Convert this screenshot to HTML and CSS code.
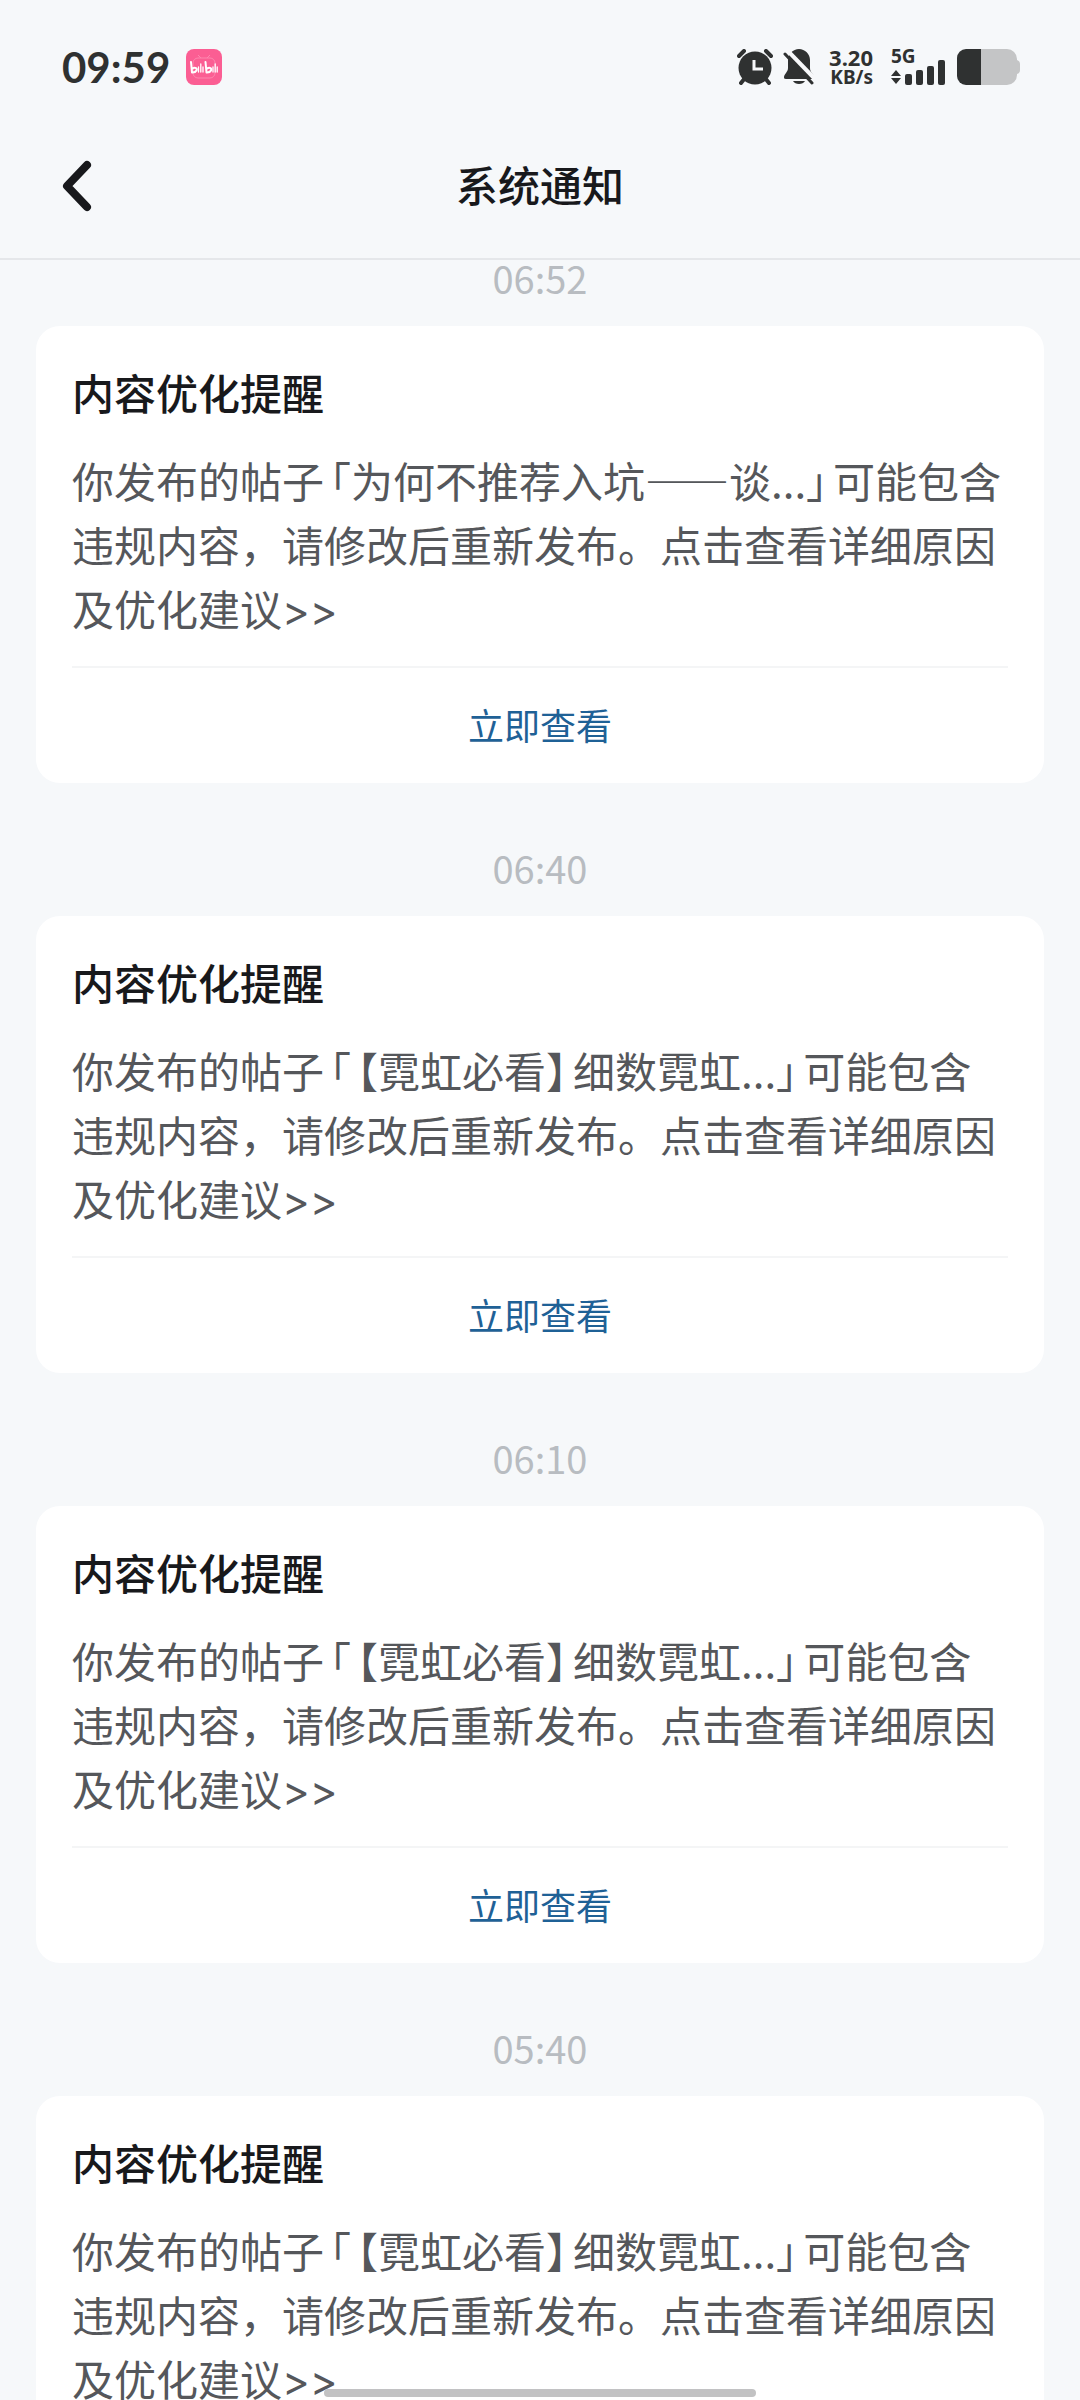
FILE: index.html
```html
<!DOCTYPE html>
<html lang="zh-CN">
<head>
    <meta charset="UTF-8">
    <meta name="viewport" content="width=device-width, initial-scale=1.0">
    <title>系统通知</title>
    <link rel="stylesheet" href="styles.css">
</head>
<body>

    <!-- Status bar -->
    <div class="status-bar">
        <span class="clock">09:59</span>
        <svg class="app-icon" viewBox="0 0 36 36" aria-hidden="true">
            <rect width="36" height="36" rx="8" fill="#fb5e93"/>
            <rect x="7" y="9" width="22" height="20" rx="5" fill="none" stroke="#fd86ae" stroke-width="1"/>
            <path d="M12 6l3 3M24 6l-3 3" stroke="#fd86ae" stroke-width="1"/>
            <g fill="none" stroke="#fff" stroke-width="2" stroke-linecap="round">
                <path d="M5 13l1 10.500M6.500 19.500c3-1.500 5 0 4 2s-3 2-4 2M19.500 13l1 10.500M21 19.500c3-1.500 5 0 4 2s-3 2-4 2"/>
                <path d="M12.500 18v5M14.800 15v8M17 18v5M27 18v5M29.200 15v8M31.200 18v5" stroke-width="1.300"/>
            </g>
        </svg>
        <div class="status-right">
            <svg class="status-icon" viewBox="0 0 36 36" aria-hidden="true">
                <path d="M2 7l5-5M34 7l-5-5" stroke="#2f3131" stroke-width="4" stroke-linecap="round"/>
                <path d="M8 29l-4 5M28 29l4 5" stroke="#2f3131" stroke-width="4" stroke-linecap="round"/>
                <circle cx="18" cy="19" r="16.500" fill="#2f3131"/>
                <path d="M17 11v9h9" fill="none" stroke="#f7f8fa" stroke-width="3"/>
            </svg>
            <svg class="status-icon bell" viewBox="0 0 32 36" aria-hidden="true">
                <path d="M16 0c6 0 11 5 11 11v8c0 5 4 6 4 9 0 1-1 2-2 2H3c-2 0-2-1-2-2 0-3 4-5 4-9v-8C5 5 10 0 16 0z" fill="#2f3131"/>
                <path d="M10 32h12c-2 4-10 4-12 0z" fill="#2f3131"/>
                <path d="M4 1l28 29" stroke="#f7f8fa" stroke-width="4"/>
                <path d="M2 5l27 29" stroke="#2f3131" stroke-width="3" stroke-linecap="round"/>
            </svg>
            <div class="speed">
                <span class="speed-value">3.20</span>
                <span class="speed-unit">KB/s</span>
            </div>
            <div class="network">
                <span class="network-type">5G</span>
                <svg class="signal" viewBox="0 0 54 25" aria-hidden="true" fill="#2f3131">
                    <path d="M0 16l5-6 5 6zM0 18h10l-5 6z"/>
                    <rect x="14" y="14" width="7" height="11" rx="2"/>
                    <rect x="25" y="10" width="7" height="15" rx="2"/>
                    <rect x="36" y="6" width="7" height="19" rx="2"/>
                    <rect x="47" y="0" width="7" height="25" rx="2"/>
                </svg>
            </div>
            <svg class="battery" viewBox="0 0 63 36" aria-hidden="true">
                <path d="M24 0h26a10 10 0 0 1 10 10v1q3 1 3 4v6q0 3-3 4v1a10 10 0 0 1-10 10H24z" fill="#c4c5c6"/>
                <path d="M24 0H9a9 9 0 0 0-9 9v18a9 9 0 0 0 9 9h15z" fill="#2f3131"/>
            </svg>
        </div>
    </div>

    <!-- Title bar -->
    <header class="header">
        <button type="button" class="back" aria-label="返回">
            <svg viewBox="0 0 30 52" aria-hidden="true">
                <path d="M25 5L5 26l20 21" fill="none" stroke="#18191c" stroke-width="8" stroke-linecap="round" stroke-linejoin="round"/>
            </svg>
        </button>
        <h1>系统通知</h1>
    </header>

    <!-- Notice list -->
    <main class="notices">
        <section class="notice">
            <time class="time">06:52</time>
            <article class="card">
                <h2>内容优化提醒</h2>
                <p>你发布的帖子<span class="open">「</span>为何不推荐入坑——谈...<span class="close">」</span>可能包含违规内容，请修改后重新发布。点击查看详细原因及优化建议<span class="more">&gt;&gt;</span></p>
                <a href="#" class="action">立即查看</a>
            </article>
        </section>

        <section class="notice">
            <time class="time">06:40</time>
            <article class="card">
                <h2>内容优化提醒</h2>
                <p>你发布的帖子<span class="open">「</span><span class="open">【</span>霓虹必看<span class="close">】</span>细数霓虹...<span class="close">」</span>可能包含违规内容，请修改后重新发布。点击查看详细原因及优化建议<span class="more">&gt;&gt;</span></p>
                <a href="#" class="action">立即查看</a>
            </article>
        </section>

        <section class="notice">
            <time class="time">06:10</time>
            <article class="card">
                <h2>内容优化提醒</h2>
                <p>你发布的帖子<span class="open">「</span><span class="open">【</span>霓虹必看<span class="close">】</span>细数霓虹...<span class="close">」</span>可能包含违规内容，请修改后重新发布。点击查看详细原因及优化建议<span class="more">&gt;&gt;</span></p>
                <a href="#" class="action">立即查看</a>
            </article>
        </section>

        <section class="notice">
            <time class="time">05:40</time>
            <article class="card">
                <h2>内容优化提醒</h2>
                <p>你发布的帖子<span class="open">「</span><span class="open">【</span>霓虹必看<span class="close">】</span>细数霓虹...<span class="close">」</span>可能包含违规内容，请修改后重新发布。点击查看详细原因及优化建议<span class="more">&gt;&gt;</span></p>
                <a href="#" class="action">立即查看</a>
            </article>
        </section>
    </main>

    <div class="home-indicator"></div>

</body>
</html>
```
FILE: styles.css
```css
* {
    box-sizing: border-box;
}

body {
    margin: 0;
    height: 100vh;
    display: flex;
    flex-direction: column;
    overflow: hidden;
    background-color: #f6f8fa;
    color: #18191c;
    font-family: "Noto Sans CJK SC", sans-serif;
}

h1, h2, p {
    margin: 0;
}

/* Status bar */
.status-bar {
    display: flex;
    align-items: center;
    flex-shrink: 0;
    height: 134px;
    padding: 0 60px 0 62px;
    color: #2f3131;
}
.clock {
    font-family: Lato, sans-serif;
    font-size: 42px;
    font-weight: 700;
    line-height: 48px;
}
.app-icon {
    width: 36px;
    height: 36px;
    margin-left: 16px;
}
.status-right {
    display: flex;
    align-items: center;
    margin-left: auto;
}
.status-icon {
    width: 36px;
    height: 36px;
}
.bell {
    width: 32px;
    margin-left: 10px;
}
.speed {
    display: flex;
    flex-direction: column;
    align-items: flex-end;
    margin-left: 14px;
    font-family: "Noto Sans", sans-serif;
    font-weight: 700;
}
.speed-value {
    font-size: 22px;
    line-height: 20px;
}
.speed-unit {
    font-size: 19px;
    line-height: 20px;
}
.network {
    display: flex;
    flex-direction: column;
    height: 36px;
    margin-left: 18px;
}
.network-type {
    height: 11px;
    font-family: "Noto Sans", sans-serif;
    font-size: 19px;
    font-weight: 700;
    line-height: 14px;
}
.signal {
    width: 54px;
    height: 25px;
}
.battery {
    width: 63px;
    height: 36px;
    margin-left: 12px;
}

/* Title bar */
.header {
    display: grid;
    grid-template-columns: 1fr auto 1fr;
    align-items: center;
    flex-shrink: 0;
    height: 126px;
    padding: 0 62px 24px;
    border-bottom: 2px solid #e5e7ea;
}
.header h1 {
    font-size: 42px;
    font-weight: 500;
    line-height: 64px;
}
.back {
    justify-self: start;
    padding: 4px 0 0;
    border: 0;
    background: none;
}
.back svg {
    display: block;
    width: 30px;
    height: 52px;
}

/* Notice list */
.notices {
    flex: 1;
    min-height: 0;
    overflow: hidden;
    padding: 0 36px;
}
.notice + .notice {
    margin-top: 67px;
}
.time {
    display: block;
    margin-bottom: 30px;
    color: #b8bcc1;
    font-size: 38px;
    line-height: 36px;
    text-align: center;
}
.card {
    padding: 34px 36px 2px;
    border-radius: 24px;
    background-color: #fff;
}
.card h2 {
    font-size: 42px;
    font-weight: 500;
    line-height: 64px;
}
.card p {
    margin: 24px 0 26px;
    color: #55575b;
    font-size: 42px;
    line-height: 64px;
}
/* Brackets take half a cell plus a small gap */
.open, .close {
    font-feature-settings: "halt";
}
.open {
    padding-left: 6px;
}
.close {
    padding-right: 6px;
}
.more {
    font-family: Inter, sans-serif;
    line-height: 1;
}
.action {
    display: block;
    border-top: 2px solid #f4f5f6;
    color: #1f6196;
    font-size: 36px;
    line-height: 113px;
    text-align: center;
    text-decoration: none;
}

/* Gesture bar over the list */
.home-indicator {
    position: fixed;
    bottom: 3px;
    left: 30%;
    width: 40%;
    height: 8px;
    border-radius: 4px;
    background-color: #c2c2c3;
}
```
